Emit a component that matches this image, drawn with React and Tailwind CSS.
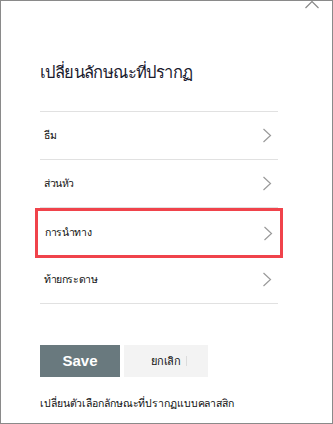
import React from "react";

const rows = ["ธีม", "ส่วนหัว", "การนำทาง", "ท้ายกระดาษ"];

function Chevron() {
  return (
    <svg width="10" height="15" viewBox="0 0 10 15" className="shrink-0">
      <path d="M1.5 1 L8.5 7.5 L1.5 14" fill="none" stroke="#9a9a9a" strokeWidth="1.2" />
    </svg>
  );
}

export default function App() {
  return (
    <div
      className="relative w-[333px] h-[424px] bg-white border border-[#8a8a8a] overflow-hidden"
      style={{ fontFamily: '"Liberation Sans", "Noto Sans", sans-serif' }}
    >
      {/* close chevron, cut at top */}
      <svg width="16" height="9" viewBox="0 0 16 9" className="absolute left-[303px] top-[-1px]">
        <path d="M1.5 8 L8 1.5 L14.5 8" fill="none" stroke="#8a8a8a" strokeWidth="1.2" />
      </svg>

      <div className="pl-[39px] pr-[54px] pt-[58px]">
        <h1
          className="text-[16.5px] tracking-[-0.6px] leading-[28px] text-[#1a1a2e] font-normal h-[52px]"
          style={{ fontFamily: '"Liberation Serif", "DejaVu Serif", serif' }}
        >
          เปลี่ยนลักษณะที่ปรากฏ
        </h1>

        <div className="border-t border-[#e1e1e1]">
          {rows.map((r, i) => (
            <div
              key={r}
              className={
                i === 2
                  ? "relative z-10 h-[50px] -mb-[2px] -mx-[5px] px-[7px] flex items-center justify-between border-[3px] border-[#f0434b] bg-white"
                  : "h-[48px] pl-[4px] pr-[6px] flex items-center justify-between border-b border-[#e1e1e1]"
              }
            >
              <span className="text-[10.5px] tracking-[-0.4px] text-[#111]">{r}</span>
              <Chevron />
            </div>
          ))}
        </div>

        <div className="flex gap-[4px] mt-[41px]">
          <button className="w-[80px] h-[32px] bg-[#69797e] text-white text-[15px] font-bold">
            Save
          </button>
          <button className="relative w-[84px] h-[32px] bg-[#f3f3f3] text-[#111] text-[11px] tracking-[-0.2px]">
            ยกเลิก
            <span className="absolute left-[62px] top-[11px] w-px h-[10px] bg-[#dcdcdc]" />
          </button>
        </div>

        <p className="mt-[19px] text-[10.5px] tracking-[-0.1px] text-[#111] whitespace-nowrap">
          เปลี่ยนตัวเลือกลักษณะที่ปรากฏแบบคลาสสิก
        </p>
      </div>
    </div>
  );
}
